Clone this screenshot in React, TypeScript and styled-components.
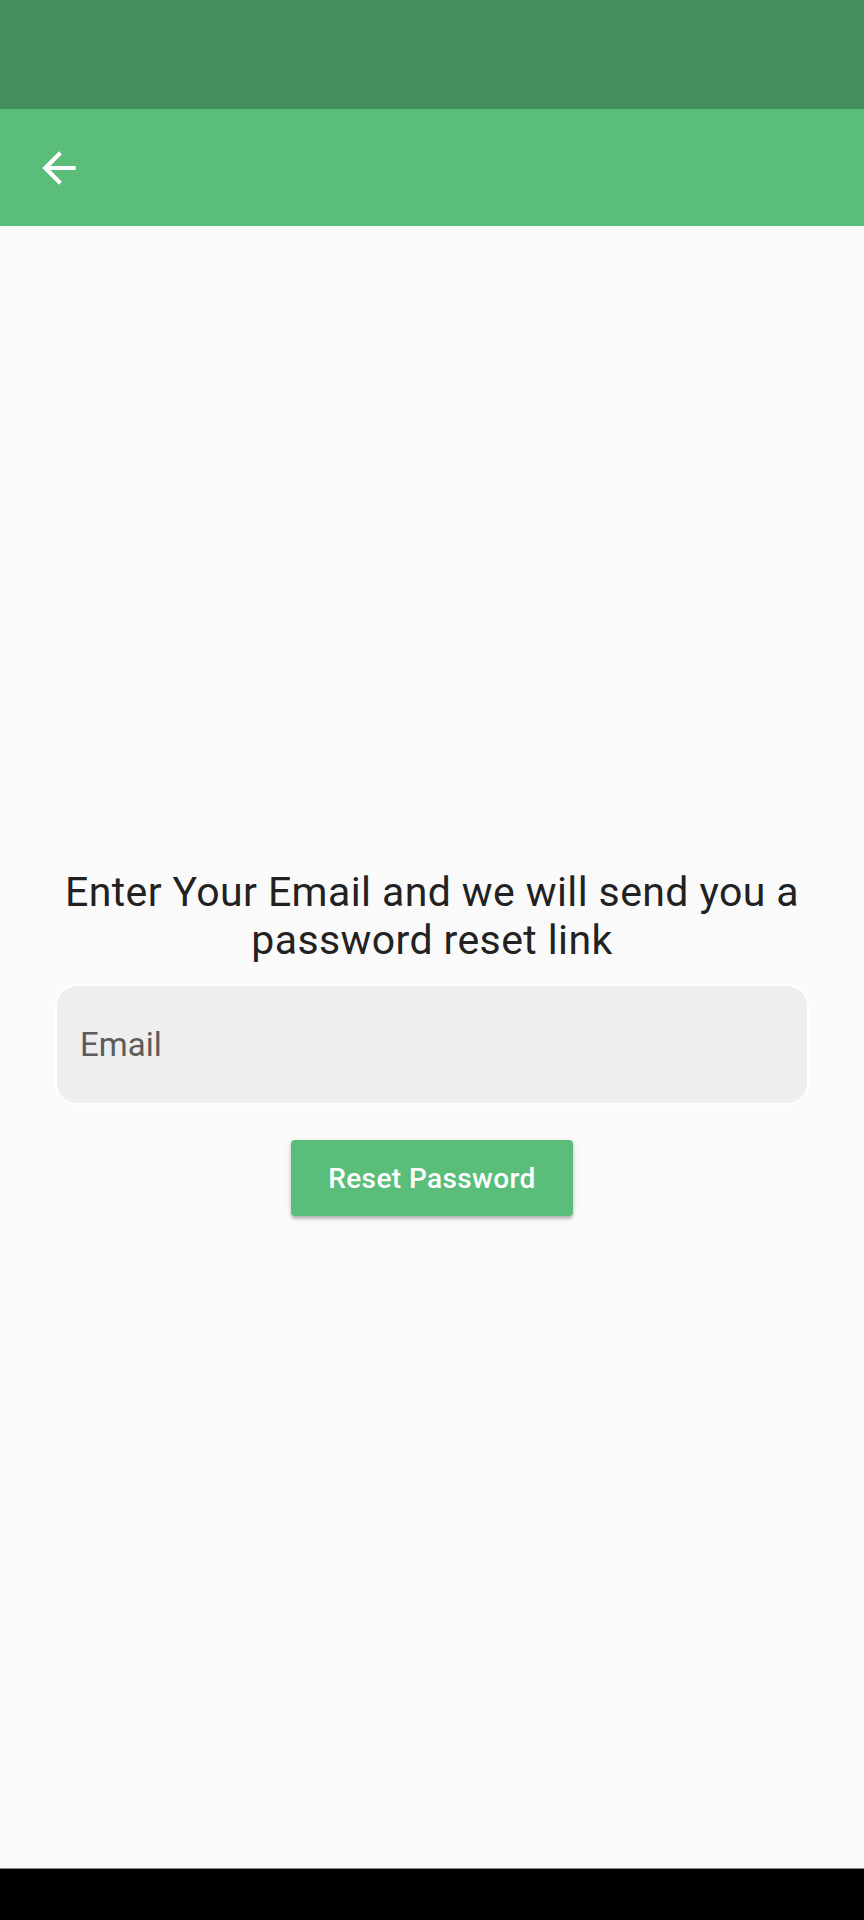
import styled, { createGlobalStyle } from "styled-components";

const GlobalStyle = createGlobalStyle`
  html, body {
    margin: 0;
    padding: 0;
    background: #fafafa;
  }
  body {
    font-family: Roboto, "Noto Sans", sans-serif;
  }
`;

const Screen = styled.div`
  display: flex;
  flex-direction: column;
  width: 864px;
  height: 1920px;
  background: #fafafa;
`;

const StatusBar = styled.div`
  height: 109px;
  background: #438f5c;
`;

const AppBar = styled.header`
  display: flex;
  align-items: center;
  height: 117px;
  background: #5abe7a;
`;

const BackButton = styled.button`
  display: flex;
  align-items: center;
  justify-content: center;
  width: 117px;
  height: 117px;
  padding: 0;
  border: none;
  background: transparent;
  cursor: pointer;
`;

const Body = styled.main`
  flex: 1;
  display: flex;
  flex-direction: column;
  justify-content: center;
  align-items: center;
  padding: 0 55px 10px;
`;

const Prompt = styled.p`
  margin: 0 0 20px;
  font-size: 41px;
  line-height: 48px;
  letter-spacing: 0.4px;
  color: #222;
  text-align: center;
`;

const EmailInput = styled.input`
  box-sizing: border-box;
  width: 100%;
  height: 121px;
  padding: 0 23px;
  border: 2px solid #ffffff;
  border-radius: 22px;
  background: #eeeeee;
  font-family: Roboto, sans-serif;
  font-size: 33px;
  color: #222;
  outline: none;

  &::placeholder {
    color: #5c5c5c;
  }
`;

const ResetButton = styled.button`
  margin-top: 35px;
  width: 282px;
  height: 76px;
  border: none;
  border-radius: 4px;
  background: #5abe7a;
  color: #fff;
  font-family: Roboto, sans-serif;
  font-weight: 500;
  font-size: 28px;
  letter-spacing: 0.4px;
  box-shadow: 0 3px 3px rgba(0, 0, 0, 0.22), 0 1px 6px rgba(0, 0, 0, 0.1);
  cursor: pointer;
`;

const NavBar = styled.div`
  height: 51px;
  background: #000;
  border-top: 1px solid #888;
`;

function App() {
  return (
    <Screen>
      <GlobalStyle />
      <StatusBar />
      <AppBar>
        <BackButton aria-label="Back">
          <svg width="50" height="50" viewBox="0 0 24 24">
            <path
              fill="#fff"
              d="M20 11H7.83l5.59-5.59L12 4l-8 8 8 8 1.41-1.41L7.83 13H20v-2z"
            />
          </svg>
        </BackButton>
      </AppBar>
      <Body>
        <Prompt>
          Enter Your Email and we will send you a
          <br />
          password reset link
        </Prompt>
        <EmailInput type="email" placeholder="Email" />
        <ResetButton>Reset Password</ResetButton>
      </Body>
      <NavBar />
    </Screen>
  );
}

export default App;
